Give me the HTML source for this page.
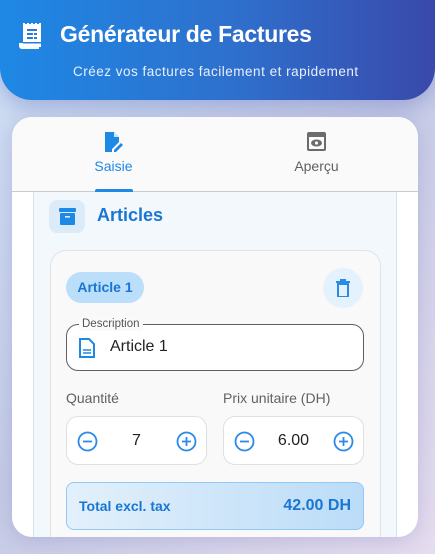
<!DOCTYPE html>
<html><head><meta charset="utf-8"><style>
*{box-sizing:border-box;margin:0;padding:0}
body{width:435px;height:554px;overflow:hidden;font-family:"Liberation Sans",sans-serif;background:linear-gradient(135deg,#cfe0f5 0%,#c5cbe6 50%,#e6dcef 100%);position:relative}
.hdr{position:absolute;left:0;top:0;width:435px;height:100px;border-radius:0 0 32px 32px;background:linear-gradient(90deg,#1e88e5,#2f6fcc 55%,#3949ab);box-shadow:0 6px 20px rgba(57,73,171,.3)}
.hdr h1{position:absolute;left:60px;top:21px;font-size:23px;color:#fff;font-weight:bold;letter-spacing:-0.3px}
.hdr p{position:absolute;left:73px;top:64px;font-size:13.5px;color:#e8f0fc;letter-spacing:0.5px}
.card{position:absolute;left:12px;top:117px;width:406px;height:420px;border-radius:20px;background:#fff;overflow:hidden;box-shadow:0 4px 20px rgba(80,80,160,.2)}
.tabs{height:75px;background:#fafafa;border-bottom:1px solid #c8ccd4;position:relative}
.tab{position:absolute;top:0;width:203px;text-align:center;font-size:14px}
.ind{position:absolute;left:83px;top:72px;width:38px;height:3px;background:#1e88e5;border-radius:2px 2px 0 0}
.sec{position:absolute;left:21px;top:75px;width:364px;height:360px;background:#f3f8fd;border:1px solid #cfe3f5;border-top:none}
.ib{position:absolute;left:15px;top:8px;width:36px;height:33px;border-radius:8px;background:#dcebfa}
.item{position:absolute;left:16px;top:58px;width:331px;height:320px;border-radius:16px;background:#f9f9f9;border:1px solid #e2e2e2}
.chip{position:absolute;left:15px;top:21px;width:78px;height:31px;border-radius:16px;background:#bbdefb;color:#1976d2;font-weight:bold;font-size:14px;line-height:31px;text-align:center}
.del{position:absolute;left:272px;top:17px;width:40px;height:40px;border-radius:50%;background:#e3f2fd}
.desc{position:absolute;left:15px;top:73px;width:298px;height:47px;border:1px solid #5f5f5f;border-radius:12px;background:#fff}
.lbl{position:absolute;left:12px;top:-8px;background:#fafafa;padding:0 3px;font-size:11.5px;color:#555;line-height:14px}
.num{position:absolute;top:165px;width:141px;height:49px;border:1px solid #e0e0e0;border-radius:12px;background:#fff}
.nl{position:absolute;top:139px;font-size:14px;color:#616161}
.tot{position:absolute;left:15px;top:231px;width:298px;height:48px;border:1px solid #90caf9;border-radius:8px;background:linear-gradient(90deg,#e3f0fb,#bbdcf8);color:#1976d2;font-weight:bold}
</style></head><body>
<div class="hdr">
<svg style="position:absolute;left:19px;top:22px" width="26" height="28" viewBox="0 0 26 28"><path d="M4 1h2v1h2V1h2v1h2V1h2v1h2V1h2v1h2V1h2v24H4z" fill="#fff"/><path d="M0 21h20v6H3a3 3 0 0 1-3-3z" fill="#fff"/><rect x="8" y="7" width="10" height="2" fill="#2a7ad8"/><rect x="8" y="11" width="6" height="2" fill="#2a7ad8"/><rect x="15" y="11" width="3" height="2" fill="#2a7ad8"/><rect x="8" y="15" width="6" height="2" fill="#2a7ad8"/><rect x="15" y="15" width="3" height="2" fill="#2a7ad8"/><rect x="4" y="20" width="18" height="1.5" fill="#2a7ad8"/></svg>
<h1>Générateur de Factures</h1>
<p>Créez vos factures facilement et rapidement</p>
</div>
<div class="card">
<div class="tabs">
<div class="tab" style="left:0;color:#1e88e5"><svg style="display:block;margin:15px auto 0" width="20" height="20" viewBox="0 0 20 20"><path d="M1 0h9l5 5v5l-7 7v3H1z" fill="#1e88e5"/><path d="M10 0v5h5" fill="#cfe3fa"/><path d="M10 18l7-7 2 2-7 7h-2z" fill="#1e88e5"/></svg><div style="margin-top:6px">Saisie</div></div>
<div class="tab" style="left:203px;color:#616161"><svg style="display:block;margin:15px auto 0" width="19" height="19" viewBox="0 0 19 19"><rect x="0" y="0" width="19" height="19" rx="2" fill="#6b6b6b"/><rect x="2" y="5" width="15" height="12" fill="#fafafa"/><ellipse cx="9.5" cy="11" rx="5.5" ry="3.5" fill="#6b6b6b"/><circle cx="9.5" cy="11" r="1.6" fill="#fafafa"/></svg><div style="margin-top:7px">Aperçu</div></div>
<div class="ind"></div>
</div>
<div class="sec">
<div class="ib"><svg style="position:absolute;left:10px;top:8px" width="17" height="17" viewBox="0 0 17 17"><rect x="0" y="0" width="17" height="4" rx="1" fill="#1e88e5"/><rect x="1" y="5" width="15" height="12" rx="1" fill="#1e88e5"/><rect x="6" y="8" width="5" height="1.6" fill="#dcebfa"/></svg></div>
<div style="position:absolute;left:63px;top:13px;font-size:18px;font-weight:bold;color:#1976d2">Articles</div>
<div class="item">
<div class="chip">Article 1</div>
<div class="del"><svg style="position:absolute;left:13px;top:11px" width="14" height="18" viewBox="0 0 14 18"><path d="M0 2h14v2H0zM4 0h6v2H4z" fill="#2a8ae6"/><path d="M2 5h10v13H2z" fill="none" stroke="#2a8ae6" stroke-width="2"/></svg></div>
<div class="desc"><div class="lbl">Description</div>
<svg style="position:absolute;left:12px;top:13px" width="16" height="20" viewBox="0 0 16 20"><path d="M1 1h9l5 5v13H1z" fill="none" stroke="#1e88e5" stroke-width="2"/><path d="M4 12h8M4 15h8" stroke="#1e88e5" stroke-width="1.6"/></svg>
<div style="position:absolute;left:43px;top:13px;font-size:16px;color:#222">Article 1</div></div>
<div class="nl" style="left:15px">Quantité</div>
<div class="nl" style="left:172px">Prix unitaire (DH)</div>
<div class="num" style="left:15px">
<svg style="position:absolute;left:10px;top:14px" width="21" height="21"><circle cx="10.5" cy="10.5" r="9" fill="none" stroke="#2a8ae6" stroke-width="1.8"/><path d="M6 10.5h9" stroke="#2a8ae6" stroke-width="1.8"/></svg>
<div style="position:absolute;left:0;width:139px;text-align:center;top:15px;font-size:16px;color:#222">7</div>
<svg style="position:absolute;left:109px;top:14px" width="21" height="21"><circle cx="10.5" cy="10.5" r="9" fill="none" stroke="#2a8ae6" stroke-width="1.8"/><path d="M6 10.5h9M10.5 6v9" stroke="#2a8ae6" stroke-width="1.8"/></svg></div>
<div class="num" style="left:172px">
<svg style="position:absolute;left:10px;top:14px" width="21" height="21"><circle cx="10.5" cy="10.5" r="9" fill="none" stroke="#2a8ae6" stroke-width="1.8"/><path d="M6 10.5h9" stroke="#2a8ae6" stroke-width="1.8"/></svg>
<div style="position:absolute;left:0;width:139px;text-align:center;top:15px;font-size:16px;color:#222">6.00</div>
<svg style="position:absolute;left:109px;top:14px" width="21" height="21"><circle cx="10.5" cy="10.5" r="9" fill="none" stroke="#2a8ae6" stroke-width="1.8"/><path d="M6 10.5h9M10.5 6v9" stroke="#2a8ae6" stroke-width="1.8"/></svg></div>
<div class="tot"><span style="position:absolute;left:12px;top:15px;font-size:14px">Total excl. tax</span><span style="position:absolute;right:12px;top:14px;font-size:16px">42.00 DH</span></div>
</div></div></div>
</body></html>
